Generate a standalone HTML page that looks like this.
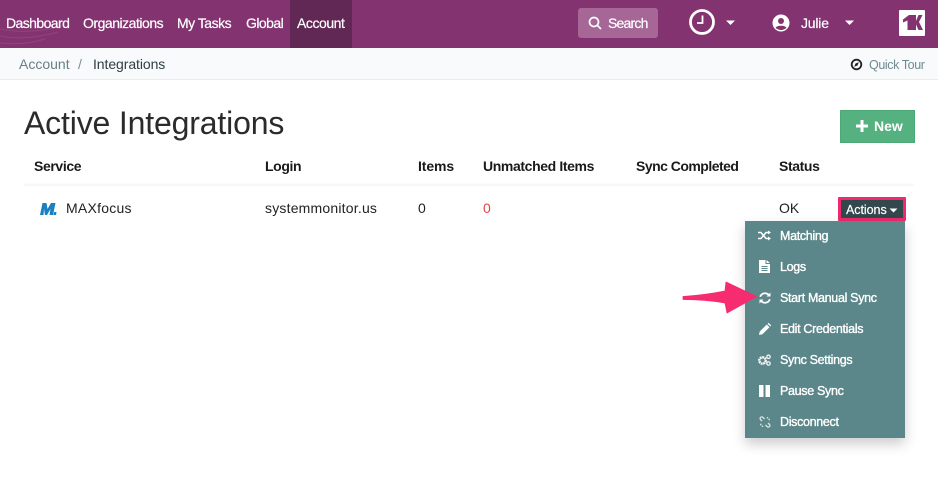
<!DOCTYPE html>
<html><head><meta charset="utf-8"><style>
html,body{margin:0;padding:0;width:938px;height:484px;overflow:hidden;background:#fff;font-family:"Liberation Sans",sans-serif}
.t{position:absolute;white-space:nowrap;line-height:16px}
.nav{color:#fff;font-size:14px;top:15px;letter-spacing:-.6px;-webkit-text-stroke:.2px #fff}
.th{color:#1a1a1a;font-weight:bold;font-size:14px;top:158px;letter-spacing:-.38px}
.td{color:#222;font-size:14px;top:200px}
.mi{color:#fff;font-size:12.5px;left:780px;letter-spacing:-.32px;-webkit-text-stroke:.35px #fff}
svg{position:absolute;display:block}
.b{position:absolute}
</style></head><body>
<div class="b" style="left:0;top:0;width:938px;height:48px;background:#843371"></div>
<svg style="left:0;top:24px" width="70" height="24" fill="none" stroke="#8f4579" stroke-width="1"><path d="M0 5C20 9 40 8 62 2M0 12C20 16 40 13 58 8M0 19C18 21 32 19 45 15"/></svg>
<div class="b" style="left:290px;top:0;width:62px;height:48px;background:#612755"></div>
<div class="t nav" style="left:6px;letter-spacing:-.58px">Dashboard</div>
<div class="t nav" style="left:83px;letter-spacing:-.48px">Organizations</div>
<div class="t nav" style="left:177px;letter-spacing:-.5px">My Tasks</div>
<div class="t nav" style="left:246px;letter-spacing:-.55px">Global</div>
<div class="t nav" style="left:297px;letter-spacing:-.45px">Account</div>
<div class="b" style="left:578px;top:8px;width:80px;height:30px;background:#a66696;border-radius:3px"></div>
<svg style="left:588px;top:16px" width="14" height="14" fill="none" stroke="#fff" stroke-width="1.7"><circle cx="6" cy="6" r="4.5"/><path d="M9.3 9.3L13 13"/></svg>
<div class="t nav" style="left:608px;top:15px;letter-spacing:-.8px">Search</div>
<svg style="left:688px;top:8px" width="28" height="28" fill="none" stroke="#fff"><circle cx="14" cy="14" r="11.500" stroke-width="2.800"/><path d="M14.500 7.500V15H9" stroke-width="1.800"/></svg>
<svg style="left:725px;top:20px" width="11" height="6" fill="#fff"><path d="M1 .5H10L5.500 5Z"/></svg>
<svg style="left:772px;top:14px" width="18" height="18"><circle cx="9" cy="9" r="8.500" fill="#fff"/><circle cx="9" cy="7" r="3" fill="#843371"/><path d="M3.500 13.800C5 11 13 11 14.500 13.800C13 15.300 11 16 9 16S5 15.300 3.500 13.800Z" fill="#843371"/></svg>
<div class="t nav" style="left:801px;letter-spacing:-.2px">Julie</div>
<svg style="left:844px;top:20px" width="11" height="6" fill="#fff"><path d="M1 .5H10L5.500 5Z"/></svg>
<div class="b" style="left:899px;top:10px;width:26px;height:26px;background:#fff;border-radius:1px"></div>
<svg style="left:899px;top:10px" width="26" height="26" fill="#843371"><path d="M4 9.500L10 5H13V20H8.500V10.500L4 12.500Z"/><path d="M13 5H17V11L19.500 5H23.500L20 12L24 20H19.500L17 14.500V20H13Z"/></svg>

<div class="b" style="left:0;top:48px;width:938px;height:31px;background:#f8fafb;border-bottom:1px solid #e4ecec"></div>
<div class="t" style="left:19px;top:56px;font-size:14px;color:#6a7f86">Account</div>
<div class="t" style="left:78px;top:56px;font-size:14px;color:#7d8f94">/</div>
<div class="t" style="left:93px;top:56px;font-size:14px;color:#2e3f45;letter-spacing:-.08px">Integrations</div>
<svg style="left:850px;top:58px" width="13" height="13"><circle cx="6.500" cy="6.500" r="4.800" fill="none" stroke="#222" stroke-width="1.800"/><path d="M8.800 4.200L7.500 7.500 4.200 8.800 5.500 5.500Z" fill="#222"/></svg>
<div class="t" style="left:869px;top:57px;font-size:12.500px;color:#6f8a93;letter-spacing:-.4px">Quick Tour</div>

<div class="t" style="left:24px;top:104px;font-size:32px;line-height:38px;color:#2b2b2b;letter-spacing:-.16px">Active Integrations</div>
<div class="b" style="left:840px;top:110px;width:75px;height:33px;background:#55b17f;box-sizing:border-box;border:1px solid #4da776"></div>
<svg style="left:856px;top:120px" width="12" height="12" fill="#fff"><path d="M4.500 0H7.500V4.500H12V7.500H7.500V12H4.500V7.500H0V4.500H4.500Z"/></svg>
<div class="t" style="left:874px;top:118px;font-size:14px;font-weight:bold;color:#fff;letter-spacing:0">New</div>

<div class="b" style="left:24px;top:182px;width:890px;height:4px;background:linear-gradient(#fff,#f5f5f5)"></div>
<div class="t th" style="left:34px">Service</div>
<div class="t th" style="left:265px">Login</div>
<div class="t th" style="left:418px;letter-spacing:-.1px">Items</div>
<div class="t th" style="left:483px">Unmatched Items</div>
<div class="t th" style="left:636px;letter-spacing:-.52px">Sync Completed</div>
<div class="t th" style="left:779px">Status</div>

<svg style="left:40px;top:203px" width="18" height="13" fill="#1c7fc0"><path d="M0 12L2.500 0H6.500L7.500 6 11 0H15.500L13 12H9.500L10.500 6 7 12H5L4 6 3.500 12Z"/><path d="M14 9H16.500L16 12H13.500Z"/></svg>
<div class="t td" style="left:66px;letter-spacing:.25px">MAXfocus</div>
<div class="t td" style="left:265px;letter-spacing:.2px">systemmonitor.us</div>
<div class="t td" style="left:418px">0</div>
<div class="t td" style="left:483px;color:#e04545">0</div>
<div class="t td" style="left:779px">OK</div>

<div class="b" style="left:838px;top:197px;width:68px;height:24px;background:#33484d;box-sizing:border-box;border:3px solid #f0286c;border-radius:1px"></div>
<div class="t" style="left:846px;top:202px;font-size:12.500px;color:#fff;letter-spacing:-.05px;-webkit-text-stroke:.2px #fff">Actions</div>
<svg style="left:889px;top:208px" width="9" height="5" fill="#fff"><path d="M.5 .5H8.500L4.500 4.500Z"/></svg>

<div class="b" style="left:745px;top:221px;width:160px;height:217px;background:#5b868a;box-shadow:0 6px 12px rgba(0,0,0,.2)"></div>
<div class="t mi" style="top:228px">Matching</div>
<div class="t mi" style="top:259px">Logs</div>
<div class="t mi" style="top:290px">Start Manual Sync</div>
<div class="t mi" style="top:321px">Edit Credentials</div>
<div class="t mi" style="top:352px">Sync Settings</div>
<div class="t mi" style="top:383px">Pause Sync</div>
<div class="t mi" style="top:414px">Disconnect</div>

<svg style="left:758px;top:230px" width="13" height="11" fill="none" stroke="#fff" stroke-width="1.500"><path d="M0 2.500H3L8 8.500H11M0 8.500H3L8 2.500H11"/><path d="M10 .5L13 2.500 10 4.500ZM10 6.500L13 8.500 10 10.500Z" fill="#fff" stroke="none"/></svg>
<svg style="left:759px;top:260px" width="11" height="13"><path d="M0 0H6.500V4H11V13H0Z" fill="#fff"/><path d="M7.500 0L11 3H7.500Z" fill="#fff"/><path d="M2.500 6.500H8.500M2.500 8.500H8.500M2.500 10.500H8.500" stroke="#5b868a"/></svg>
<svg style="left:759px;top:292px" width="12" height="12" fill="none" stroke="#fff" stroke-width="1.800"><path d="M1.200 4.800A5 5 0 0 1 9.600 2.800M10.800 7.200A5 5 0 0 1 2.400 9.200"/><path d="M11.500 .5V4.500H7.500ZM.5 11.500V7.500H4.500Z" fill="#fff" stroke="none"/></svg>
<svg style="left:759px;top:323px" width="12" height="12" fill="#fff"><path d="M0 12L.7 8.600 7.800 1.500 10.500 4.200 3.400 11.300ZM8.600 .7L9.300 0H9.800L12 2.200V2.700L11.300 3.400Z"/></svg>
<svg style="left:758px;top:354px" width="13" height="12"><circle cx="4.500" cy="6.500" r="3.200" fill="none" stroke="#fff" stroke-width="2.400" stroke-dasharray="1.800 .6"/><circle cx="10.500" cy="2.800" r="1.700" fill="none" stroke="#fff" stroke-width="1.200"/><circle cx="10.500" cy="9.500" r="1.700" fill="none" stroke="#fff" stroke-width="1.200"/></svg>
<svg style="left:759px;top:385px" width="11" height="12" fill="#fff"><rect width="4.500" height="12"/><rect x="6.500" width="4.500" height="12"/></svg>
<svg style="left:759px;top:416px" width="12" height="12" fill="none" stroke="#d5e2e2" stroke-width="1.400"><path d="M3 5L1.500 3.500A1.500 1.500 0 0 1 4 1.500L5.500 3M9 7L10.500 8.500A1.500 1.500 0 0 1 8 10.500L6.500 9M8.500 1V2.500M11 3.500H9.500M1 8.500H2.500M3.500 11V9.500"/></svg>

<svg style="left:680px;top:278px" width="78" height="38"><path d="M3 18.500Q25 17 45 13L46 4 76.500 18.500 47 35 45 25Q25 21.500 3 21.500Z" fill="#f72b6f" stroke="#f72b6f" stroke-width=".8" stroke-linejoin="round"/></svg>
</body></html>
